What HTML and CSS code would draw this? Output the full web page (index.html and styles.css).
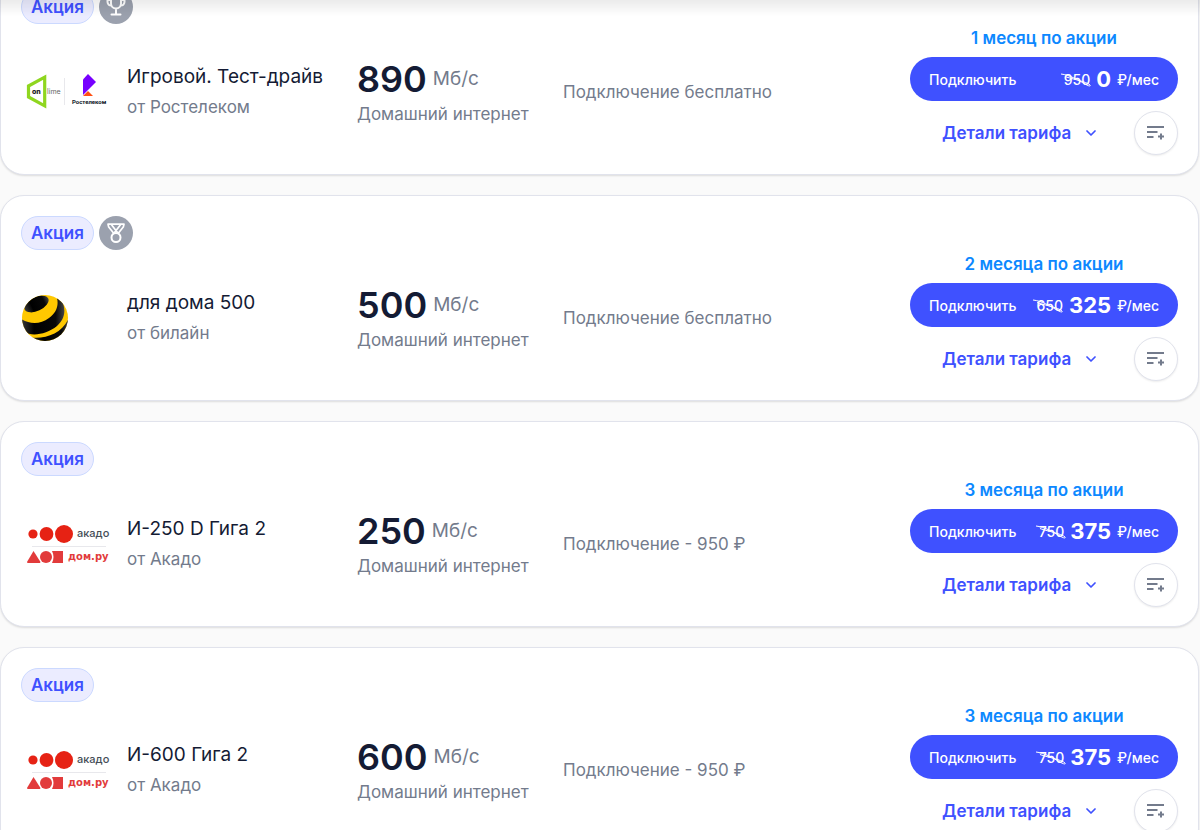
FILE: index.html
```html
<!DOCTYPE html>
<html lang="ru">
<head>
    <meta charset="UTF-8">
    <meta name="viewport" content="width=device-width, initial-scale=1.0">
    <title>Тарифы на домашний интернет</title>
    <link rel="stylesheet" href="styles.css">
</head>
<body>
    <!-- shared icons -->
    <svg class="sprite" aria-hidden="true">
        <symbol id="icon-trophy" viewBox="0 0 20 20">
            <path d="M5 1h10v5.500a5 5 0 0 1-10 0zM5 3H1.500v2A3.600 3.600 0 0 0 5.500 8.500M15 3h3.500v2a3.600 3.600 0 0 1-4 3.500M10 11.500V17M5.500 17.500h9" fill="none" stroke="currentColor" stroke-width="2" stroke-linecap="round" stroke-linejoin="round"/>
        </symbol>
        <symbol id="icon-medal" viewBox="0 0 20 20">
            <path d="M2 1.200h16L17.300 4 12.500 10M2 1.200 2.700 4 7.500 10M5.500 1.800l5.800 7.400M14.500 1.800 8.700 9.200" fill="none" stroke="currentColor" stroke-width="1.700" stroke-linecap="round" stroke-linejoin="round"/>
            <circle cx="10" cy="14.500" r="4.500" fill="none" stroke="currentColor" stroke-width="2"/>
        </symbol>
        <symbol id="icon-chevron" viewBox="0 0 10 6">
            <path d="M1 1l4 4 4-4" fill="none" stroke="currentColor" stroke-width="1.700" stroke-linecap="round" stroke-linejoin="round"/>
        </symbol>
        <symbol id="icon-compare" viewBox="0 0 18 14">
            <path d="M0 1h17M0 6h10.500M0 11h6.500M14 7.500v6M11 10.500h6" fill="none" stroke="currentColor" stroke-width="2"/>
        </symbol>
        <symbol id="icon-strike" viewBox="0 0 32 14">
            <path d="M1 1C10 2 18 7 24 10.500 29 13.500 31 13.500 30 12 28 9 8 5 5 3.500" fill="none" stroke="currentColor" stroke-width="1"/>
        </symbol>
    </svg>

    <main class="tariffs">
        <article class="card">
            <div class="badges">
                <span class="badge">Акция</span>
                <span class="award"><svg><use href="#icon-trophy"/></svg></span>
            </div>
            <div class="card-body">
                <div class="logo">
                    <svg width="90" height="36" viewBox="0 0 90 36" role="img" aria-label="Ростелеком">
                        <path d="M7.500 12 23.700 3.200v28.600L7.500 23z" fill="none" stroke="#8fd61f" stroke-width="3.200"/>
                        <rect x="11" y="13" width="10" height="9" fill="#fff"/>
                        <text x="11" y="20" font-size="7" font-weight="800" fill="#222">on</text>
                        <text x="26" y="20" font-size="7" fill="#666">lime</text>
                        <path d="M43.500 4v27" stroke="#e8e8ec"/>
                        <path d="M62 5.500 67 0l8 8-13 13z" fill="#7700ff"/>
                        <path d="M62 22 67 17l5 5z" fill="#ff4f12"/>
                        <text class="logo-rt" x="51" y="30" fill="#101828">Ростелеком</text>
                    </svg>
                </div>
                <div class="name">
                    <h2>Игровой. Тест-драйв</h2>
                    <p>от Ростелеком</p>
                </div>
                <div class="speed">
                    <p class="speed-value"><strong>890</strong> <span>Мб/с</span></p>
                    <p>Домашний интернет</p>
                </div>
                <p class="connection">Подключение бесплатно</p>
                <div class="actions">
                    <p class="promo">1 месяц по акции</p>
                    <button class="connect">
                        <span>Подключить</span>
                        <span class="price"><span class="old">950<svg><use href="#icon-strike"/></svg></span><b>0</b><span>₽/мес</span></span>
                    </button>
                    <div class="more">
                        <button class="details">Детали тарифа <svg><use href="#icon-chevron"/></svg></button>
                        <button class="compare" aria-label="Добавить к сравнению"><svg><use href="#icon-compare"/></svg></button>
                    </div>
                </div>
            </div>
        </article>

        <article class="card">
            <div class="badges">
                <span class="badge">Акция</span>
                <span class="award"><svg><use href="#icon-medal"/></svg></span>
            </div>
            <div class="card-body">
                <div class="logo">
                    <svg width="48" height="48" viewBox="0 0 48 48" role="img" aria-label="билайн">
                        <defs>
                            <clipPath id="ball"><circle cx="24" cy="24" r="23"/></clipPath>
                            <linearGradient id="dark" x1="0" y1="0" x2="1" y2="0">
                                <stop offset="0" stop-color="#3a3a3a"/>
                                <stop offset=".3" stop-color="#000"/>
                                <stop offset=".8" stop-color="#080808"/>
                                <stop offset="1" stop-color="#444"/>
                            </linearGradient>
                        </defs>
                        <g clip-path="url(#ball)">
                            <rect width="48" height="48" fill="#ffc800"/>
                            <ellipse cx="15.500" cy="10" rx="13" ry="7" fill="url(#dark)" transform="rotate(-25 15.500 10)"/>
                            <path d="M0 25C8 30 19 31 28 24 35 19 38 12 36 4l6 5c3 9 1 17-6 23-10 8-24 11-33 6z" fill="url(#dark)"/>
                            <path d="M10 43.500c14 2 32-4 38-20V48H14z" fill="url(#dark)"/>
                        </g>
                    </svg>
                </div>
                <div class="name">
                    <h2>для дома 500</h2>
                    <p>от билайн</p>
                </div>
                <div class="speed">
                    <p class="speed-value"><strong>500</strong> <span>Мб/с</span></p>
                    <p>Домашний интернет</p>
                </div>
                <p class="connection">Подключение бесплатно</p>
                <div class="actions">
                    <p class="promo">2 месяца по акции</p>
                    <button class="connect">
                        <span>Подключить</span>
                        <span class="price"><span class="old">650<svg><use href="#icon-strike"/></svg></span><b>325</b><span>₽/мес</span></span>
                    </button>
                    <div class="more">
                        <button class="details">Детали тарифа <svg><use href="#icon-chevron"/></svg></button>
                        <button class="compare" aria-label="Добавить к сравнению"><svg><use href="#icon-compare"/></svg></button>
                    </div>
                </div>
            </div>
        </article>

        <article class="card">
            <div class="badges">
                <span class="badge">Акция</span>
            </div>
            <div class="card-body">
                <div class="logo">
                    <svg width="96" height="46" viewBox="0 0 96 46" role="img" aria-label="Акадо, Дом.ру">
                        <circle cx="12" cy="13" r="4.600" fill="#e62214"/>
                        <circle cx="25.500" cy="13" r="6.900" fill="#e62214"/>
                        <circle cx="43" cy="13" r="9" fill="#e62214"/>
                        <text x="56" y="16" font-size="11" font-weight="500" fill="#454d57">акадо</text>
                        <path d="M11 25.500h74" stroke="#e8e8ec"/>
                        <path d="M6 41 12.500 30l7 11c0 1-1 1-2 1H8c-1 0-2 0-2-1z" fill="#e23b3b"/>
                        <circle cx="25" cy="36" r="6" fill="#e23b3b"/>
                        <path d="M31 30h11v12H31c2-4 2-8 0-12z" fill="#e23b3b"/>
                        <text class="logo-domru" x="47" y="39" fill="#e23b3b">дом.ру</text>
                    </svg>
                </div>
                <div class="name">
                    <h2>И-250 D Гига 2</h2>
                    <p>от Акадо</p>
                </div>
                <div class="speed">
                    <p class="speed-value"><strong>250</strong> <span>Мб/с</span></p>
                    <p>Домашний интернет</p>
                </div>
                <p class="connection">Подключение - 950 ₽</p>
                <div class="actions">
                    <p class="promo">3 месяца по акции</p>
                    <button class="connect">
                        <span>Подключить</span>
                        <span class="price"><span class="old">750<svg><use href="#icon-strike"/></svg></span><b>375</b><span>₽/мес</span></span>
                    </button>
                    <div class="more">
                        <button class="details">Детали тарифа <svg><use href="#icon-chevron"/></svg></button>
                        <button class="compare" aria-label="Добавить к сравнению"><svg><use href="#icon-compare"/></svg></button>
                    </div>
                </div>
            </div>
        </article>

        <article class="card">
            <div class="badges">
                <span class="badge">Акция</span>
            </div>
            <div class="card-body">
                <div class="logo">
                    <svg width="96" height="46" viewBox="0 0 96 46" role="img" aria-label="Акадо, Дом.ру">
                        <circle cx="12" cy="13" r="4.600" fill="#e62214"/>
                        <circle cx="25.500" cy="13" r="6.900" fill="#e62214"/>
                        <circle cx="43" cy="13" r="9" fill="#e62214"/>
                        <text x="56" y="16" font-size="11" font-weight="500" fill="#454d57">акадо</text>
                        <path d="M11 25.500h74" stroke="#e8e8ec"/>
                        <path d="M6 41 12.500 30l7 11c0 1-1 1-2 1H8c-1 0-2 0-2-1z" fill="#e23b3b"/>
                        <circle cx="25" cy="36" r="6" fill="#e23b3b"/>
                        <path d="M31 30h11v12H31c2-4 2-8 0-12z" fill="#e23b3b"/>
                        <text class="logo-domru" x="47" y="39" fill="#e23b3b">дом.ру</text>
                    </svg>
                </div>
                <div class="name">
                    <h2>И-600 Гига 2</h2>
                    <p>от Акадо</p>
                </div>
                <div class="speed">
                    <p class="speed-value"><strong>600</strong> <span>Мб/с</span></p>
                    <p>Домашний интернет</p>
                </div>
                <p class="connection">Подключение - 950 ₽</p>
                <div class="actions">
                    <p class="promo">3 месяца по акции</p>
                    <button class="connect">
                        <span>Подключить</span>
                        <span class="price"><span class="old">750<svg><use href="#icon-strike"/></svg></span><b>375</b><span>₽/мес</span></span>
                    </button>
                    <div class="more">
                        <button class="details">Детали тарифа <svg><use href="#icon-chevron"/></svg></button>
                        <button class="compare" aria-label="Добавить к сравнению"><svg><use href="#icon-compare"/></svg></button>
                    </div>
                </div>
            </div>
        </article>
    </main>
</body>
</html>
```
FILE: styles.css
```css
* {
    box-sizing: border-box;
}
html {
    overflow-x: hidden;
    scrollbar-width: none;
}
body {
    font-family: Inter, sans-serif;
    font-size: 17px;
    background-color: #fafafa;
    color: #737b8c;
    margin: 0;
}
/* shadow under the page header */
body::before {
    content: "";
    position: fixed;
    top: 0;
    left: 0;
    right: 0;
    height: 16px;
    background: linear-gradient(rgba(0, 0, 0, 0.08), rgba(0, 0, 0, 0));
    z-index: 1;
}
h2, p {
    margin: 0;
}
button {
    font-family: inherit;
    border: none;
    padding: 0;
    cursor: pointer;
}
svg {
    display: block;
}
.sprite {
    position: absolute;
    width: 0;
    height: 0;
}
.tariffs {
    display: flex;
    flex-direction: column;
    gap: 20px;
    margin-top: -31px;
    padding-right: 1px;
}
.card {
    padding: 20px 20px 19px;
    background-color: white;
    border: 1px solid #e1e3ec;
    border-radius: 24px;
    box-shadow: 0 1px 2px rgba(0, 0, 0, 0.12);
}
.badges {
    display: flex;
    gap: 5px;
    height: 34px;
}
.badge {
    padding: 0 9px;
    border: 1px solid #cbd9ff;
    border-radius: 17px;
    background-color: #ebecff;
    color: #3f51ff;
    font-weight: 600;
    line-height: 32px;
}
.award {
    display: flex;
    align-items: center;
    justify-content: center;
    width: 34px;
    height: 34px;
    border-radius: 50%;
    background-color: #9ba1ae;
    color: white;
}
.award svg {
    width: 20px;
    height: 20px;
}
.card-body {
    display: grid;
    grid-template-columns: 106px 230fr 206fr 347fr 268px;
    align-items: center;
}
.logo, .name, .connection {
    padding-top: 5px;
}
.logo-rt {
    font: bold 6px Roboto, sans-serif;
}
.logo-domru {
    font: bold 10px "DejaVu Sans", sans-serif;
}
.name {
    line-height: 30px;
}
.name h2 {
    color: #141b34;
    font-size: 19px;
    font-weight: 400;
}
.speed {
    padding-top: 3px;
    line-height: 24px;
}
.speed-value {
    display: flex;
    align-items: center;
    gap: 6px;
    font-size: 19px;
    line-height: 46px;
}
.speed-value strong {
    color: #141b34;
    font-size: 36px;
    font-weight: 600;
}
.promo {
    margin-bottom: 5px;
    color: #0d88ff;
    font-weight: 600;
    line-height: 28px;
    text-align: center;
}
.connect {
    display: flex;
    align-items: center;
    justify-content: space-between;
    width: 100%;
    height: 44px;
    padding: 0 19px;
    border-radius: 22px;
    background-color: #3f51ff;
    color: white;
    font-size: 14px;
    font-weight: 500;
    white-space: nowrap;
}
.price {
    display: flex;
    align-items: center;
    gap: 6px;
}
.price b {
    font-size: 22px;
    font-weight: 700;
}
.old {
    position: relative;
}
.old svg {
    position: absolute;
    top: 2px;
    left: -4px;
    width: 32px;
    height: 14px;
}
.more {
    display: flex;
    justify-content: space-between;
    align-items: center;
    margin-top: 10px;
    padding-left: 32px;
}
.details {
    display: flex;
    align-items: center;
    gap: 15px;
    background: none;
    color: #3f51ff;
    font-size: 17px;
    font-weight: 600;
}
.details svg {
    width: 10px;
    height: 6px;
}
.compare {
    display: flex;
    align-items: center;
    justify-content: center;
    width: 44px;
    height: 44px;
    border: 1px solid #e1e3ec;
    border-radius: 50%;
    background-color: white;
    color: #737b8c;
    box-shadow: 0 1px 2px rgba(0, 0, 0, 0.08);
}
.compare svg {
    width: 18px;
    height: 14px;
}
```
